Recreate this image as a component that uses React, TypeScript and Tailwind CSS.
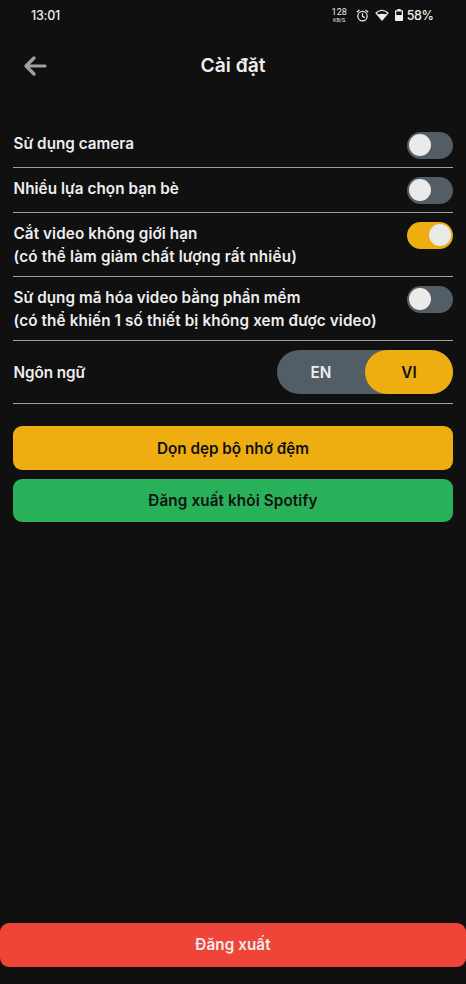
import type { ReactNode } from "react";

function Toggle({ on = false }: { on?: boolean }) {
  return (
    <button
      role="switch"
      aria-checked={on}
      className={`flex h-[26.5px] w-[46px] shrink-0 items-center rounded-full px-[2px] ${
        on ? "justify-end bg-[#eead10]" : "justify-start bg-[#525d66]"
      }`}
    >
      <span className="size-[22px] rounded-full bg-[#eaeaea]" />
    </button>
  );
}

function Row({ height, children }: { height: string; children: ReactNode }) {
  return (
    <div className={`flex items-start justify-between border-b border-[#9aa0a4] pt-[9px] ${height}`}>
      {children}
    </div>
  );
}

function Label({ children }: { children: ReactNode }) {
  return <div className="flex flex-col whitespace-nowrap pl-[0.5px] text-[15.25px] leading-[23px]">{children}</div>;
}

function StatusBar() {
  return (
    <div className="flex h-[30px] items-center justify-between pl-[31px] pr-[32.5px] text-[#eeeeee]">
      <span className="pt-[2px] text-[12.5px] font-medium tracking-[-0.2px]">13:01</span>
      <div className="flex items-center">
        <div className="mr-[9px] flex w-[15px] flex-col items-center font-['Roboto',sans-serif] font-normal">
          <span className="text-[9px] leading-[10px]">128</span>
          <span className="text-[5.5px] leading-[6px]">KB/S</span>
        </div>
        <svg className="mr-[6px]" width="13" height="13" viewBox="0 0 24 24" fill="none" stroke="currentColor" strokeWidth="2.3">
          <circle cx="12" cy="13.2" r="8.6" />
          <path d="M12 8v5.5l4 2.4M1.5 6 6.5 1.8M22.5 6 17.5 1.8" />
        </svg>
        <svg className="mr-[6px]" width="14" height="12" viewBox="0 0 14 12">
          <path d="M1 3.9Q7-1.2 13 3.9L7 11Z" fill="none" stroke="currentColor" strokeWidth="1.3" strokeLinejoin="round" />
          <path d="M2.6 5.6Q7 3.7 11.4 5.6L7 11Z" fill="currentColor" />
        </svg>
        <svg className="mr-[4px]" width="8" height="12" viewBox="0 0 8 12">
          <path fillRule="evenodd" fill="currentColor" d="M2.3 0h3.4v1.3H7.3q.7 0 .7.7v9.3q0 .7-.7.7H.7q-.7 0-.7-.7V2q0-.7.7-.7h1.6ZM1.3 2.5v3.5h5.4V2.5Z" />
        </svg>
        <span className="pt-[2px] text-[12.5px] font-medium tracking-[-0.4px]">58%</span>
      </div>
    </div>
  );
}

export default function App() {
  return (
    <div className="flex h-[984px] w-[466px] flex-col overflow-hidden bg-[#101010] font-['Inter','Noto_Sans',sans-serif] font-semibold text-[#eeeeee]">
      <StatusBar />
      <header className="grid h-[71px] grid-cols-[1fr_auto_1fr] items-center pl-[24px] pr-[24px]">
        <svg width="23" height="20" viewBox="0 0 23 20" fill="none" stroke="#9da2a7" strokeWidth="3.2" strokeLinecap="round" strokeLinejoin="round">
          <path d="M10 2 2 10l8 8M2.5 10H21" />
        </svg>
        <h1 className="pb-[2px] text-[19.25px] leading-[24px]">Cài đặt</h1>
      </header>
      <main className="mt-[22px] flex flex-col px-[13px]">
        <Row height="h-[45px]">
          <Label>
            <span>Sử dụng camera</span>
          </Label>
          <Toggle />
        </Row>
        <Row height="h-[45px]">
          <Label>
            <span className="tracking-[0.05px]">Nhiều lựa chọn bạn bè</span>
          </Label>
          <Toggle />
        </Row>
        <Row height="h-[64px]">
          <Label>
            <span className="tracking-[0.09px]">Cắt video không giới hạn</span>
            <span className="tracking-[0.165px]">(có thể làm giảm chất lượng rất nhiều)</span>
          </Label>
          <Toggle on />
        </Row>
        <Row height="h-[64px]">
          <Label>
            <span className="tracking-[0.03px]">Sử dụng mã hóa video bằng phần mềm</span>
            <span className="tracking-[0.12px]">(có thể khiến 1 số thiết bị không xem được video)</span>
          </Label>
          <Toggle />
        </Row>
        <Row height="h-[63px]">
          <div className="flex h-[44px] items-center">
            <Label>
              <span className="tracking-[-0.05px]">Ngôn ngữ</span>
            </Label>
          </div>
          <div className="flex h-[44px] w-[176px] rounded-full bg-[#525d66] text-[15.25px]">
            <button className="flex-1 pt-[2px]">EN</button>
            <button className="flex-1 rounded-full bg-[#eead10] pt-[2px] text-[#101010]">VI</button>
          </div>
        </Row>
        <button className="mt-[22px] h-[44px] rounded-[9px] bg-[#eead10] pt-[2px] text-[15.25px] text-[#101010]">
          Dọn dẹp bộ nhớ đệm
        </button>
        <button className="mt-[9px] h-[43px] rounded-[9px] bg-[#29b15a] pt-px text-[15.25px] tracking-[0.12px] text-[#101010]">
          Đăng xuất khỏi Spotify
        </button>
      </main>
      <button className="mb-[17.5px] mt-auto h-[43.5px] w-full rounded-[9px] bg-[#ef4438] pt-[2px] text-[15.25px] tracking-[0.07px]">Đăng xuất</button>
    </div>
  );
}
